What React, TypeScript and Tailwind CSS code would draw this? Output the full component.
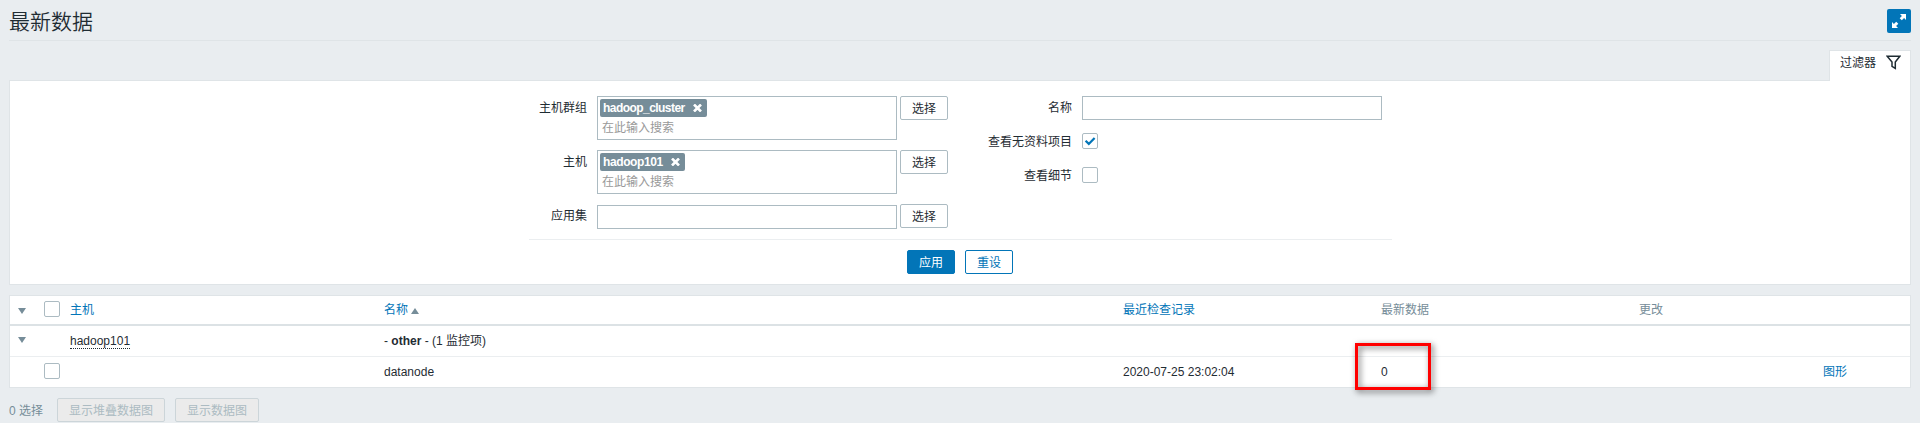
import React from "react";

const cols =
  "grid grid-cols-[60px_314px_739px_258px_258px_184px_1fr]";

function Checkbox({ checked = false }: { checked?: boolean }) {
  return (
    <span className="block h-4 w-4 rounded-[2px] border border-[#acbbc2] bg-white">
      {checked && (
        <svg viewBox="0 0 14 14" className="h-3.5 w-3.5" fill="none" stroke="#0275b8" strokeWidth="2.2">
          <path d="M2.6 6.8 L5.8 9.9 L11.6 4" />
        </svg>
      )}
    </span>
  );
}

function Triangle({ up = false }: { up?: boolean }) {
  return (
    <svg width="8" height="6" viewBox="0 0 8 6" fill="#768d99">
      <path d={up ? "M0 6h8L4 0z" : "M0 0h8L4 6z"} />
    </svg>
  );
}

function SelectButton() {
  return (
    <button className="ml-[3px] h-6 w-12 rounded-[2px] border border-[#acbbc2] bg-white leading-[22px]">
      <span className="block pt-px">选择</span>
    </button>
  );
}

function MultiSelect({ tag, tagClass }: { tag: string; tagClass: string }) {
  return (
    <div className="h-11 w-[300px] border border-[#acbbc2] px-0.5 pt-0.5">
      <div className={`flex h-[18px] items-center justify-between rounded-[2px] bg-[#768d99] pr-[5px] pl-[3px] font-bold text-white ${tagClass}`}>
        <span className="leading-[18px]">{tag}</span>
        <svg width="9" height="8" viewBox="0 0 9 8" stroke="#fff" strokeWidth="2.6">
          <path d="M1 0.5 L8 7.5 M8 0.5 L1 7.5" />
        </svg>
      </div>
      <div className="pl-0.5 leading-[22px] text-[#999]">在此输入搜索</div>
    </div>
  );
}

function Label({ children, className = "" }: { children: React.ReactNode; className?: string }) {
  return <div className={`mr-2.5 text-right leading-6 ${className}`}>{children}</div>;
}

export default function App() {
  return (
    <div className="h-[423px] w-[1920px] overflow-hidden bg-[#e9edf0] px-[9px] font-['Liberation_Sans','Noto_Sans_CJK_SC',sans-serif] text-[12px] text-[#1f2c33]">
      <header className="flex h-[41px] items-start justify-between border-b border-[#dfe4e7] pt-[9px]">
        <h1 className="text-[21px] leading-[26px] font-[350]">最新数据</h1>
        <button className="h-6 w-6 rounded-[2px] bg-[#0275b8]">
          <svg viewBox="0 0 24 24" className="h-6 w-6" fill="#fff">
            <path d="M13 5h6v6l-1.9-1.9-2.3 2.2-2.1-2.1 2.2-2.3zM5 19v-6l1.9 1.9 2.3-2.2 2.1 2.1-2.2 2.3L11 19z" />
          </svg>
        </button>
      </header>

      <div className="mt-[9px] flex justify-end">
        <div className="relative z-10 -mb-px flex h-[31px] w-[82px] items-start border border-b-0 border-[#dfe4e7] bg-white pl-2.5">
          <span className="leading-6">过滤器</span>
          <svg width="15" height="15" viewBox="0 0 15 15" className="mt-1 ml-2.5" fill="none" stroke="#1f2c33" strokeWidth="1.5">
            <path d="M1.2 1.2h12.6L9.3 7v6.3L6 11.3V7z" />
          </svg>
        </div>
      </div>

      <section className="h-[205px] border border-[#dfe4e7] bg-white pt-[15px]">
        <div className="ml-[519px] h-[144px] w-[863px] border-b border-[#ebeef0]">
          <div className="flex">
            <div className="flex w-[485px] flex-col gap-2.5">
              <div className="flex">
                <Label className="w-[58px]">主机群组</Label>
                <MultiSelect tag="hadoop_cluster" tagClass="w-[107px] tracking-[-0.55px]" />
                <SelectButton />
              </div>
              <div className="flex">
                <Label className="w-[58px]">主机</Label>
                <MultiSelect tag="hadoop101" tagClass="w-[85px] tracking-[-0.4px]" />
                <SelectButton />
              </div>
              <div className="flex">
                <Label className="w-[58px]">应用集</Label>
                <div className="mt-px h-6 w-[300px] border border-[#acbbc2]" />
                <SelectButton />
              </div>
            </div>
            <div className="flex flex-col gap-2.5">
              <div className="flex">
                <Label className="w-[58px]">名称</Label>
                <div className="h-6 w-[300px] border border-[#acbbc2]" />
              </div>
              <div className="flex h-6 items-start">
                <Label className="-ml-10 w-[98px]">查看无资料项目</Label>
                <div className="pt-[3px]"><Checkbox checked /></div>
              </div>
              <div className="flex h-6 items-start">
                <Label className="w-[58px]">查看细节</Label>
                <div className="pt-[3px]"><Checkbox /></div>
              </div>
            </div>
          </div>
        </div>
        <div className="mt-2.5 flex justify-center gap-2.5">
          <button className="h-6 w-12 rounded-[2px] border border-[#0275b8] bg-[#0275b8] leading-[22px] text-white">
            <span className="block pt-px">应用</span>
          </button>
          <button className="h-6 w-12 rounded-[2px] border border-[#0275b8] bg-white leading-[22px] text-[#0275b8]">
            <span className="block pt-px">重设</span>
          </button>
        </div>
      </section>

      <section className="relative mt-2.5 border border-[#dfe4e7] bg-white">
        <div className={`${cols} h-[30px] border-b-2 border-[#dce2e5] leading-7 text-[#0275b8]`}>
          <div className="flex pl-2">
            <div className="mt-3"><Triangle /></div>
            <div className="mt-[5px] ml-[18px]"><Checkbox /></div>
          </div>
          <div>主机</div>
          <div className="flex">
            名称
            <div className="mt-3 ml-[3px]"><Triangle up /></div>
          </div>
          <div>最近检查记录</div>
          <div className="text-[#768d99]">最新数据</div>
          <div className="text-[#768d99]">更改</div>
          <div />
        </div>
        <div className={`${cols} h-[31px] border-b border-[#ebeef0] leading-[30px]`}>
          <div className="pt-[11px] pl-2"><Triangle /></div>
          <div className="pt-2">
            <span className="block w-fit border-b border-dotted border-[#1f2c33] leading-[14px]">hadoop101</span>
          </div>
          <div>- <b>other</b> - (1 监控项)</div>
        </div>
        <div className={`${cols} h-[30px] leading-[30px]`}>
          <div className="pt-1.5 pl-[34px]"><Checkbox /></div>
          <div />
          <div>datanode</div>
          <div>2020-07-25 23:02:04</div>
          <div>0</div>
          <div />
          <div className="text-[#0275b8]">图形</div>
        </div>
        <div className="absolute top-[47px] left-[1345px] h-[47px] w-[76px] border-3 border-[#ff0000] drop-shadow-[2px_2px_3px_rgba(0,0,0,0.6)]" />
      </section>

      <footer className="mt-2.5 flex leading-6 text-[#768d99]">
        <span className="w-12 pt-px">0 选择</span>
        <button className="h-6 w-[108px] rounded-[2px] border border-[#ccd5d9] bg-[#ebebeb] leading-[22px] text-[#acbbc2]">
          <span className="block pt-px">显示堆叠数据图</span>
        </button>
        <button className="ml-2.5 h-6 w-[84px] rounded-[2px] border border-[#ccd5d9] bg-[#ebebeb] leading-[22px] text-[#acbbc2]">
          <span className="block pt-px">显示数据图</span>
        </button>
      </footer>
    </div>
  );
}
